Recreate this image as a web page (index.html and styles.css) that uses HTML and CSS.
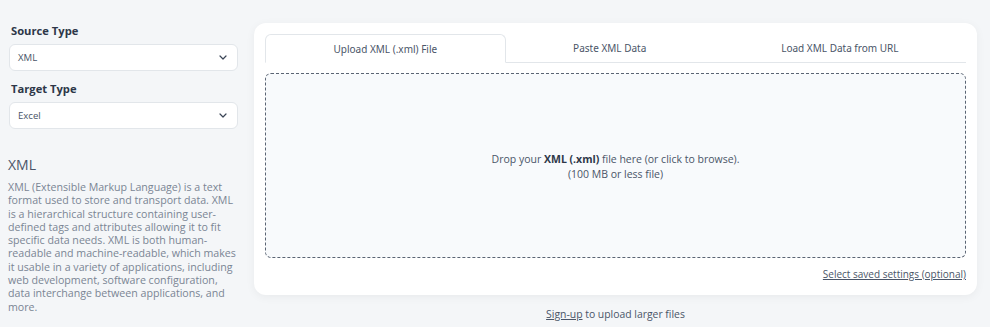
FILE: index.html
```html
<!DOCTYPE html>
<html>
<head>
<meta charset="utf-8">
<link rel="stylesheet" href="styles.css">
</head>
<body>
<div class="page">
  <aside class="side">
    <label class="field-label">Source Type</label>
    <div class="select"><span>XML</span>
      <svg class="chev" width="8" height="5" viewBox="0 0 8 5"><path d="M1 1l3 3 3-3" fill="none" stroke="#3a4556" stroke-width="1.2" stroke-linecap="round" stroke-linejoin="round"/></svg>
    </div>
    <label class="field-label second">Target Type</label>
    <div class="select"><span>Excel</span>
      <svg class="chev" width="8" height="5" viewBox="0 0 8 5"><path d="M1 1l3 3 3-3" fill="none" stroke="#3a4556" stroke-width="1.2" stroke-linecap="round" stroke-linejoin="round"/></svg>
    </div>
    <h2 class="info-title">XML</h2>
    <p class="info-text">XML (Extensible Markup Language) is a text format used to store and transport data. XML is a hierarchical structure containing user-defined tags and attributes allowing it to fit specific data needs. XML is both human-readable and machine-readable, which makes it usable in a variety of applications, including web development, software configuration, data interchange between applications, and more.</p>
  </aside>
  <main class="main">
    <section class="card">
      <nav class="tabs">
        <div class="tab active">Upload XML (.xml) File</div>
        <div class="tab">Paste XML Data</div>
        <div class="tab">Load XML Data from URL</div>
      </nav>
      <div class="drop">
        <p>Drop your <b>XML (.xml)</b> file here (or click to browse).<br>(100 MB or less file)</p>
      </div>
      <div class="saved"><a href="#">Select saved settings (optional)</a></div>
    </section>
    <p class="signup"><a href="#">Sign-up</a> to upload larger files</p>
  </main>
</div>
</body>
</html>
```
FILE: styles.css
```css
html, body {
  margin: 0;
  padding: 0;
  background: #f4f6f8;
  font-family: "Open Sans", "Noto Sans", sans-serif;
}
.page {
  display: flex;
  align-items: flex-start;
  padding: 22px 13px 0 8px;
  gap: 16px;
}
.side {
  width: 230px;
  flex: none;
  display: flex;
  flex-direction: column;
}
.field-label {
  font-size: 11.2px;
  font-weight: 700;
  color: #2d3748;
  line-height: 18px;
  padding-left: 3px;
  margin-bottom: 4px;
}
.field-label.second {
  margin-top: 9px;
}
.select {
  height: 25px;
  margin-left: 1px;
  background: #fff;
  border: 1px solid #e2e6ea;
  border-radius: 6px;
  display: flex;
  align-items: center;
  justify-content: space-between;
  padding: 0 10px 0 8px;
  font-size: 9.6px;
  color: #4a5568;
}
.chev {
  display: block;
}
.info-title {
  margin: 27px 0 0;
  font-size: 14px;
  font-weight: 400;
  color: #4a5568;
  line-height: 18px;
}
.info-text {
  margin: 7px 0 0;
  font-size: 10.65px;
  line-height: 13.3px;
  color: #7a8594;
}
.main {
  flex: 1;
  padding-top: 1px;
}
.card {
  background: #fff;
  border-radius: 12px;
  box-shadow: 0 2px 10px rgba(0,0,0,0.05);
  padding: 11px 11px 14px;
}
.tabs {
  display: flex;
  border-bottom: 1px solid #e2e6ea;
  height: 28px;
}
.tab {
  flex: 1 1 auto;
  display: flex;
  align-items: center;
  justify-content: center;
  font-family: "Noto Sans", sans-serif;
  font-size: 10px;
  color: #4a5568;
}
.tab.active {
  border: 1px solid #e2e6ea;
  border-bottom: 1px solid #fff;
  margin-bottom: -1px;
  border-radius: 6px 6px 0 0;
  background: #fff;
}
.drop {
  margin-top: 10px;
  height: 183px;
  border: 1px dashed #5a6473;
  border-radius: 6px;
  background: #f8fafc;
  display: flex;
  align-items: center;
  justify-content: center;
  text-align: center;
}
.drop p {
  margin: 0;
  font-size: 10.5px;
  line-height: 15px;
  color: #4a5568;
  padding-top: 2px;
}
.drop b {
  color: #2d3748;
}
.saved {
  text-align: right;
  margin-top: 9px;
  font-size: 10px;
  line-height: 14px;
}
.saved a, .signup a {
  color: #4a5568;
}
.signup {
  margin: 12px 0 0;
  text-align: center;
  font-size: 10.4px;
  color: #4a5568;
  line-height: 14px;
}
```
